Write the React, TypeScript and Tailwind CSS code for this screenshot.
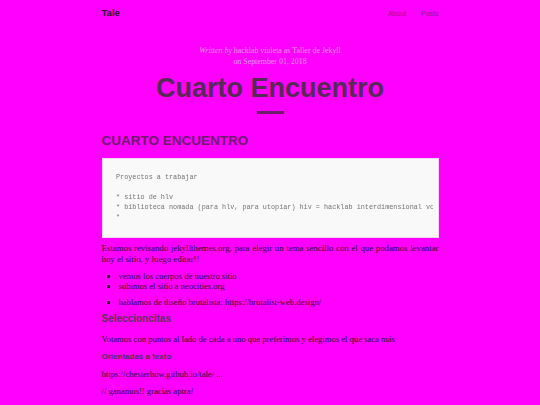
import React from "react";

const serif = { fontFamily: '"Liberation Serif", "Times New Roman", serif' };

export default function App() {
  return (
    <div className="min-h-[405px] w-full overflow-hidden bg-[#ff00ff] antialiased">
      <div className="mx-auto w-[337px]">
        {/* nav */}
        <nav className="flex items-baseline justify-between pt-[7px] font-['Liberation_Sans',Arial,sans-serif]">
          <span className="text-[9.5px] font-bold leading-[12px] text-[#2b142b]">Tale</span>
          <div className="flex items-baseline gap-[15px] text-[7px] leading-[12px] text-[#8e1f8e]">
            <span>About</span>
            <span>Posts</span>
          </div>
        </nav>

        {/* meta */}
        <div className="mt-[26px] text-center text-[7.9px] leading-[10.5px] text-[#ea98ea] font-['Liberation_Serif',serif]">
          <div>
            <em>Written by</em> hacklab violeta as Taller de Jekyll
          </div>
          <div>on September 01, 2018</div>
        </div>

        <h1 className="mt-[5px] text-center text-[27px] font-bold leading-[32px] text-[#552a55] font-['Liberation_Sans',Arial,sans-serif]">
          Cuarto Encuentro
        </h1>
        <div className="mx-auto mt-[7px] h-[3px] w-[27px] bg-[#6b1f6b]" />

        <h2 className="mt-[19px] text-[13.5px] font-bold leading-[16px] text-[#6e1a6e] font-['Liberation_Sans',Arial,sans-serif]">
          CUARTO ENCUENTRO
        </h2>

        <div className="mt-[9px] border border-[#f3d6f3] bg-[#f9f9f9] pb-[15px] pl-[13px] pr-[5px] pt-[13px]">
          <pre className="overflow-hidden whitespace-pre text-[6.8px] leading-[10px] text-[#747474] [will-change:transform] font-['Liberation_Mono','Courier_New',monospace]">
{`Proyectos a trabajar

* sitio de hlv
* biblioteca nomada (para hlv, para utopiar) hiv = hacklab interdimensional volador
*`}
          </pre>
        </div>

        <p className="mt-[5px] text-justify text-[8.8px] leading-[11px] text-[#300a30]" style={serif}>
          Estamos revisando jekyllthemes.org, para elegir un tema sencillo con el que podamos levantar hoy el sitio, y luego editar!!
        </p>

        <ul className="mt-[6px] list-[square] pl-[17px] text-[8.6px] leading-[10px] text-[#300a30]" style={serif}>
          <li>vemos los cuerpos de nuestro sitio</li>
          <li>subimos el sitio a neocities.org</li>
        </ul>
        <ul className="mt-[6px] list-[square] pl-[17px] text-[8.6px] leading-[10px] text-[#300a30]" style={serif}>
          <li>hablamos de diseño brutalista: https://brutalist-web.design/</li>
        </ul>

        <h3 className="mt-[6px] text-[10px] font-bold leading-[12px] text-[#5e2f5e] font-['Liberation_Sans',Arial,sans-serif]">
          Seleccioncitas
        </h3>
        <p className="mt-[9px] text-[8.6px] leading-[11px] text-[#300a30]" style={serif}>
          Votamos con puntos al lado de cada a uno que preferimos y elegimos el que saca más
        </p>
        <h4 className="mt-[7px] text-[8px] font-bold leading-[10px] text-[#5a2a5a] font-['Liberation_Sans',Arial,sans-serif]">
          Orientadas a texto
        </h4>
        <p className="mt-[7px] text-[8.6px] leading-[11px] text-[#300a30]" style={serif}>
          https://chesterhow.github.io/tale/ ...
        </p>
        <p className="mt-[6px] text-[8.6px] leading-[11px] text-[#300a30]" style={serif}>
          // ganamos!! gracias aptra!
        </p>
      </div>
    </div>
  );
}
